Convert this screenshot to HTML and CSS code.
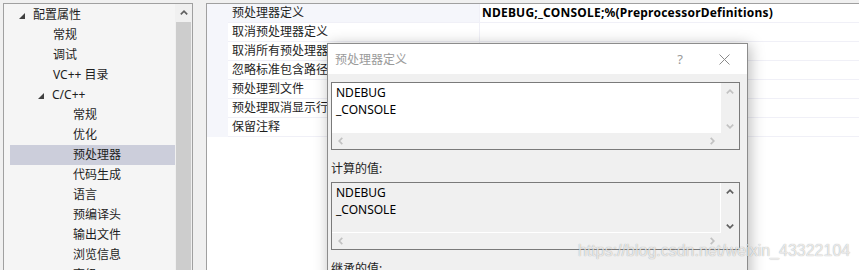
FILE: index.html
```html
<!DOCTYPE html>
<html lang="zh-CN">
<head>
<meta charset="utf-8">
<title>预处理器定义</title>
<link rel="stylesheet" href="styles.css">
</head>
<body>
<div class="app">
  <div class="tree-panel">
    <div class="tree">
      <div class="node l0"><span class="exp"><svg width="6" height="6" viewBox="0 0 6 6"><polygon points="6,0 6,6 0,6"/></svg></span>配置属性</div>
      <div class="node l1">常规</div>
      <div class="node l1">调试</div>
      <div class="node l1">VC++ 目录</div>
      <div class="node l1b"><span class="exp"><svg width="6" height="6" viewBox="0 0 6 6"><polygon points="6,0 6,6 0,6"/></svg></span>C/C++</div>
      <div class="node l2">常规</div>
      <div class="node l2">优化</div>
      <div class="node l2 selected">预处理器</div>
      <div class="node l2">代码生成</div>
      <div class="node l2">语言</div>
      <div class="node l2">预编译头</div>
      <div class="node l2">输出文件</div>
      <div class="node l2">浏览信息</div>
      <div class="node l2">高级</div>
    </div>
    <div class="vscroll">
      <div class="sbtn"><svg width="8" height="5" viewBox="0 0 8 5"><polyline points="0.8,4.3 4,1.2 7.2,4.3"/></svg></div>
      <div class="thumb"></div>
    </div>
  </div>
  <div class="grid-panel">
    <div class="prow sel"><div class="gutter"></div><div class="pname">预处理器定义</div><div class="pval">NDEBUG;_CONSOLE;%(PreprocessorDefinitions)</div></div>
    <div class="prow"><div class="gutter"></div><div class="pname">取消预处理器定义</div><div class="pval"></div></div>
    <div class="prow"><div class="gutter"></div><div class="pname">取消所有预处理器定义</div><div class="pval"></div></div>
    <div class="prow"><div class="gutter"></div><div class="pname">忽略标准包含路径</div><div class="pval"></div></div>
    <div class="prow"><div class="gutter"></div><div class="pname">预处理到文件</div><div class="pval"></div></div>
    <div class="prow"><div class="gutter"></div><div class="pname">预处理取消显示行号</div><div class="pval"></div></div>
    <div class="prow"><div class="gutter"></div><div class="pname">保留注释</div><div class="pval"></div></div>
  </div>
</div>

<div class="dialog">
  <div class="titlebar">
    <div class="title">预处理器定义</div>
    <div class="tbtn help">?</div>
    <div class="tbtn close"><svg width="11" height="11" viewBox="0 0 11 11"><path d="M0.5 0.5 L10.5 10.5 M10.5 0.5 L0.5 10.5"/></svg></div>
  </div>
  <div class="dbody">
    <div class="editbox">
      <div class="text edit">NDEBUG<br>_CONSOLE</div>
      <div class="vbar">
        <span class="arr off"><svg width="8" height="5" viewBox="0 0 8 5"><polyline points="0.8,4.3 4,1.2 7.2,4.3"/></svg></span>
        <span class="arr off"><svg width="8" height="5" viewBox="0 0 8 5"><polyline points="0.8,0.7 4,3.8 7.2,0.7"/></svg></span>
      </div>
      <div class="hbar">
        <span class="arr off"><svg width="5" height="8" viewBox="0 0 5 8"><polyline points="4.3,0.8 1.2,4 4.3,7.2"/></svg></span>
        <span class="arr off"><svg width="5" height="8" viewBox="0 0 5 8"><polyline points="0.7,0.8 3.8,4 0.7,7.2"/></svg></span>
      </div>
      <div class="corner"></div>
    </div>
    <div class="label">计算的值:</div>
    <div class="editbox">
      <div class="text ro">NDEBUG<br>_CONSOLE</div>
      <div class="vbar">
        <span class="arr on"><svg width="8" height="5" viewBox="0 0 8 5"><polyline points="0.8,4.3 4,1.2 7.2,4.3"/></svg></span>
        <span class="arr on"><svg width="8" height="5" viewBox="0 0 8 5"><polyline points="0.8,0.7 4,3.8 7.2,0.7"/></svg></span>
      </div>
      <div class="hbar">
        <span class="arr off"><svg width="5" height="8" viewBox="0 0 5 8"><polyline points="4.3,0.8 1.2,4 4.3,7.2"/></svg></span>
        <span class="arr off"><svg width="5" height="8" viewBox="0 0 5 8"><polyline points="0.7,0.8 3.8,4 0.7,7.2"/></svg></span>
      </div>
      <div class="corner"></div>
    </div>
    <div class="label">继承的值:</div>
  </div>
</div>

<div class="watermark">https://blog.csdn.net/weixin_43322104</div>
</body>
</html>
```

FILE: styles.css
```css
html, body {
  margin: 0;
  padding: 0;
}
body {
  width: 859px;
  height: 270px;
  overflow: hidden;
  position: relative;
  background: #f0f0f0;
  font-family: "Noto Sans", "Noto Sans CJK SC", sans-serif;
  font-size: 12px;
  color: #1e1e1e;
}
.app {
  display: flex;
  gap: 13px;
  padding: 3px 0 0 3px;
  height: 300px;
}

/* left tree */
.tree-panel {
  width: 188px;
  flex: none;
  border: 1px solid #a0a0a0;
  background: #f5f5f5;
  display: flex;
  height: 300px;
}
.tree {
  flex: 1;
  padding: 1px 0 0 6px;
}
.node {
  height: 20px;
  line-height: 20px;
  display: flex;
  align-items: center;
  white-space: nowrap;
}
.node.l0 { padding-left: 9px; }
.node.l1 { padding-left: 43px; }
.node.l1b { padding-left: 28px; }
.node.l2 { padding-left: 63px; }
.node.selected { background: #cccedb; }
.exp {
  width: 14px;
  height: 20px;
  display: flex;
  align-items: center;
}
.exp svg { fill: #404040; display: block; margin-top: 1px; }

.vscroll {
  width: 17px;
  flex: none;
  background: #f0f0f0;
  display: flex;
  flex-direction: column;
}
.sbtn {
  height: 17px;
  display: flex;
  align-items: center;
  justify-content: center;
}
.sbtn svg polyline { fill: none; stroke: #606060; stroke-width: 1.7; }
.thumb {
  flex: 1;
  margin: 1px 1px 0 1px;
  background: #cdcdcd;
}

/* property grid */
.grid-panel {
  flex: 1;
  border-left: 1px solid #a0a0a0;
  border-top: 1px solid #a0a0a0;
  background: #ffffff;
  height: 300px;
}
.prow {
  display: grid;
  grid-template-columns: 21px 252px 1fr;
  height: 19px;
}
.gutter { background: #f5f6fb; }
.pname, .pval {
  border-bottom: 1px solid #f0f0f7;
  line-height: 18px;
  padding-left: 4px;
  white-space: nowrap;
  overflow: hidden;
}
.pname { border-right: 1px solid #f0f0f7; }
.prow.sel .pname { background: #f5f6fb; }
.pval {
  font-weight: bold;
  color: #000;
  padding-left: 2px;
  letter-spacing: 0.22px;
}

/* dialog */
.dialog {
  position: absolute;
  left: 327px;
  top: 43px;
  width: 419px;
  height: 260px;
  border: 1px solid #8c8c8c;
  background: #f0f0f0;
  box-shadow: 2px 2px 14px rgba(0, 0, 0, 0.28);
}
.titlebar {
  height: 30px;
  background: #ffffff;
  display: flex;
  align-items: center;
}
.title {
  flex: 1;
  padding-left: 7px;
  color: #9a9a9a;
}
.tbtn {
  width: 46px;
  height: 30px;
  display: flex;
  align-items: center;
  justify-content: center;
  color: #9a9a9a;
}
.tbtn.help { font-size: 13px; margin-right: -2px; }
.tbtn.close svg path { stroke: #8a8a8a; stroke-width: 1; fill: none; }
.dbody {
  padding: 8px 7px 0 3px;
}
.editbox {
  height: 66px;
  border: 1px solid #7a7a7a;
  display: grid;
  grid-template-columns: 1fr 18px;
  grid-template-rows: 1fr 16px;
  background: #f0f0f0;
}
.text {
  padding: 1px 0 0 4px;
  line-height: 17px;
  color: #000;
}
.text.edit { background: #ffffff; }
.text.ro {
  border-right: 1px solid #ffffff;
  border-bottom: 1px solid #ffffff;
}
.vbar {
  display: flex;
  flex-direction: column;
  justify-content: space-between;
  align-items: center;
  padding: 6px 0 4px;
}
.hbar {
  display: flex;
  justify-content: space-between;
  align-items: center;
  padding: 0 6px 0 6px;
}
.arr { display: flex; }
.arr svg polyline { fill: none; stroke-width: 1.7; }
.arr.off svg polyline { stroke: #c2c2c2; }
.arr.on svg polyline { stroke: #606060; }
.label {
  margin: 11px 0 5px 0;
  line-height: 16px;
  color: #1e1e1e;
}

.watermark {
  position: absolute;
  left: 578px;
  top: 241px;
  font-family: "Liberation Sans", Arial, sans-serif;
  font-size: 16px;
  line-height: 20px;
  color: rgba(255, 255, 255, 0.75);
  text-shadow: 0 0 1px rgba(0, 0, 0, 0.4);
  white-space: nowrap;
}
```
